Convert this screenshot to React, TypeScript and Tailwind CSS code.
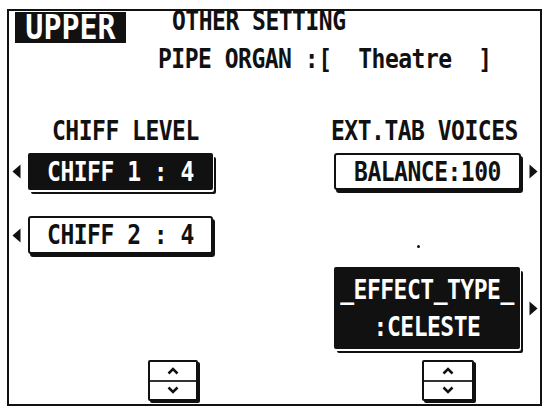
const txt = "block text-[23px] leading-[20px] tracking-[-0.5px] font-bold scale-y-[1.15] whitespace-pre";

function Arrow({ dir }: { dir: "left" | "right" }) {
  return (
    <svg width="9" height="15" viewBox="0 0 9 15" className="shrink-0 block">
      {dir === "left" ? (
        <polygon points="8.5,0.5 8.5,14.5 0.5,7.5" fill="#111" />
      ) : (
        <polygon points="0.5,0.5 0.5,14.5 8.5,7.5" fill="#111" />
      )}
    </svg>
  );
}

function ValueBox({
  children,
  dark,
  className,
}: {
  children: React.ReactNode;
  dark?: boolean;
  className: string;
}) {
  const look = dark
    ? "bg-[#111] text-white rounded-[2px] shadow-[1px_2px_0_0_#fff,3px_4px_0_0_#111]"
    : "bg-white border-2 border-[#111] rounded-[3px] shadow-[2px_3px_0_0_#111]";
  return <div className={`flex flex-col items-center justify-center ${look} ${className}`}>{children}</div>;
}

function Stepper({ className }: { className: string }) {
  return (
    <div className={`flex flex-col border-2 border-[#111] rounded-[2px] bg-white shadow-[2px_2px_0_0_#111] ${className}`}>
      <div className="flex-1 flex items-center justify-center">
        <svg width="12" height="8" viewBox="0 0 12 8">
          <polyline points="1.5,6.5 6,2 10.5,6.5" fill="none" stroke="#111" strokeWidth="2.5" />
        </svg>
      </div>
      <div className="h-[2px] bg-[#333]" />
      <div className="flex-1 flex items-center justify-center">
        <svg width="12" height="8" viewBox="0 0 12 8">
          <polyline points="1.5,1.5 6,6 10.5,1.5" fill="none" stroke="#111" strokeWidth="2.5" />
        </svg>
      </div>
    </div>
  );
}

export default function App() {
  return (
    <div className="w-[548px] h-[409px] overflow-hidden bg-white pt-[9px] pl-[7px] text-[#111] font-['DejaVu_Sans_Mono','Liberation_Mono',monospace]">
      <div className="w-[535px] h-[397px] border-2 border-[#111] flex flex-col">
        {/* header */}
        <div className="flex items-start">
          <div className="ml-[6px] mt-[1px] w-[111px] h-[31px] bg-[#111] text-white flex items-center justify-center">
            <span className="block text-[30px] leading-none font-bold scale-y-[1.1]">UPPER</span>
          </div>
          <div className="ml-[32px] flex flex-col">
            <span className={`pl-[14px] ${txt}`}>OTHER SETTING</span>
            <span className={`mt-[18px] ${txt}`}>PIPE ORGAN :[  Theatre  ]</span>
          </div>
        </div>

        {/* body */}
        <div className="mt-[52px] flex flex-1">
          <div className="w-[271px] flex flex-col">
            <span className={`pl-[43px] ${txt}`}>CHIFF LEVEL</span>
            <div className="mt-[12px] flex items-center">
              <div className="ml-[3px]">
                <Arrow dir="left" />
              </div>
              <ValueBox dark className="ml-[7px] w-[185px] h-[37px]">
                <span className={txt}>CHIFF 1 : 4</span>
              </ValueBox>
            </div>
            <div className="mt-[26px] flex items-center">
              <div className="ml-[3px]">
                <Arrow dir="left" />
              </div>
              <ValueBox className="ml-[7px] w-[185px] h-[38px]">
                <span className={txt}>CHIFF 2 : 4</span>
              </ValueBox>
            </div>
            <Stepper className="mt-auto mb-[3px] ml-[139px] w-[50px] h-[41px]" />
          </div>

          <div className="flex-1 flex flex-col">
            <span className={`pl-[51px] ${txt}`}>EXT.TAB VOICES</span>
            <div className="mt-[12px] flex items-center">
              <ValueBox className="ml-[54px] w-[187px] h-[37px]">
                <span className={txt}>BALANCE:100</span>
              </ValueBox>
              <div className="ml-[8px]">
                <Arrow dir="right" />
              </div>
            </div>
            <div className="mt-[55px] ml-[137px] w-[3px] h-[3px] rounded-full bg-[#111]" />
            <div className="mt-[19px] flex items-center">
              <ValueBox dark className="ml-[54px] w-[186px] h-[82px] gap-[17px]">
                <span className={txt}>_EFFECT_TYPE_</span>
                <span className={txt}>:CELESTE</span>
              </ValueBox>
              <div className="ml-[9px]">
                <Arrow dir="right" />
              </div>
            </div>
            <Stepper className="mt-auto mb-[3px] ml-[142px] w-[52px] h-[41px]" />
          </div>
        </div>
      </div>
    </div>
  );
}
